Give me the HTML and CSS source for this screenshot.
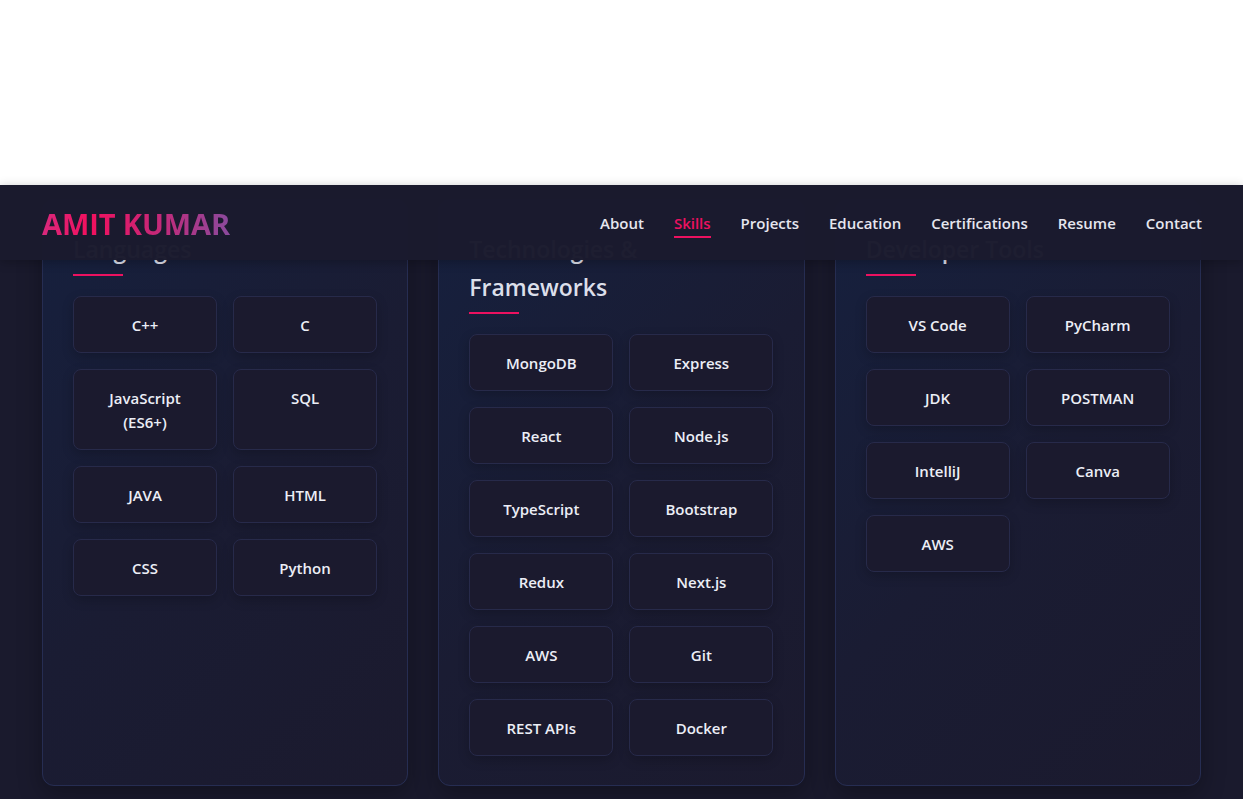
FILE: index.html
```html
<!DOCTYPE html>
<html lang="en">
<head>
<meta charset="utf-8">
<title>Amit Kumar - Skills</title>
<link rel="stylesheet" href="styles.css">
</head>
<body>
<div class="top-space"></div>
<div class="page">
  <nav class="navbar">
    <div class="logo">AMIT KUMAR</div>
    <ul class="nav-links">
      <li><a href="#">About</a></li>
      <li><a href="#" class="active">Skills</a></li>
      <li><a href="#">Projects</a></li>
      <li><a href="#">Education</a></li>
      <li><a href="#">Certifications</a></li>
      <li><a href="#">Resume</a></li>
      <li><a href="#">Contact</a></li>
    </ul>
  </nav>
  <section class="skills">
    <div class="card">
      <h3 class="card-title">Languages</h3>
      <div class="pills">
        <div class="pill">C++</div>
        <div class="pill">C</div>
        <div class="pill">JavaScript (ES6+)</div>
        <div class="pill">SQL</div>
        <div class="pill">JAVA</div>
        <div class="pill">HTML</div>
        <div class="pill">CSS</div>
        <div class="pill">Python</div>
      </div>
    </div>
    <div class="card">
      <h3 class="card-title">Technologies &amp; Frameworks</h3>
      <div class="pills">
        <div class="pill">MongoDB</div>
        <div class="pill">Express</div>
        <div class="pill">React</div>
        <div class="pill">Node.js</div>
        <div class="pill">TypeScript</div>
        <div class="pill">Bootstrap</div>
        <div class="pill">Redux</div>
        <div class="pill">Next.js</div>
        <div class="pill">AWS</div>
        <div class="pill">Git</div>
        <div class="pill">REST APIs</div>
        <div class="pill">Docker</div>
      </div>
    </div>
    <div class="card">
      <h3 class="card-title">Developer Tools</h3>
      <div class="pills">
        <div class="pill">VS Code</div>
        <div class="pill">PyCharm</div>
        <div class="pill">JDK</div>
        <div class="pill">POSTMAN</div>
        <div class="pill">IntelliJ</div>
        <div class="pill">Canva</div>
        <div class="pill">AWS</div>
      </div>
    </div>
  </section>
</div>
</body>
</html>
```

FILE: styles.css
```css
* { box-sizing: border-box; }
html, body { margin: 0; padding: 0; }
body {
  background: #ffffff;
  font-family: "Open Sans", "Noto Sans", sans-serif;
  height: 799px;
  overflow: hidden;
}
.top-space { height: 185px; background: #ffffff; }
.page {
  position: relative;
  background: #1a1a2d;
  height: 614px;
}
.navbar {
  position: absolute;
  top: 0; left: 0; right: 0;
  height: 75px;
  z-index: 10;
  display: flex;
  align-items: center;
  justify-content: space-between;
  padding: 0 41px 0 42px;
  background: rgba(26, 26, 46, 0.985);
  box-shadow: 0 2px 10px rgba(0,0,0,0.25);
}
.logo {
  font-size: 29px;
  font-weight: 700;
  letter-spacing: -0.1px;
  background: linear-gradient(90deg, #d8297d 0%, #f2105e 25%, #c72777 60%, #8a4a9d 100%);
  -webkit-background-clip: text;
  background-clip: text;
  color: transparent;
  margin-top: 2px;
}
.nav-links {
  list-style: none;
  display: flex;
  gap: 30px;
  margin: 0;
  padding: 0;
}
.nav-links a {
  display: block;
  color: #e6e6ee;
  text-decoration: none;
  font-size: 15px;
  font-weight: 600;
  line-height: 22px;
  padding-bottom: 2px;
  border-bottom: 2px solid transparent;
  margin-top: 4px;
}
.nav-links a.active {
  color: #ec1160;
  border-bottom-color: #ec1160;
}
.skills {
  display: grid;
  grid-template-columns: repeat(3, 1fr);
  gap: 30px;
  padding: 14px 42px 0 42px;
}
.card {
  height: 587px;
  padding: 30px 30px 30px 30px;
  border: 1px solid #262d52;
  border-radius: 12px;
  background: linear-gradient(135deg, #16203e 0%, #1a1c33 50%, #1b1a2e 100%);
  box-shadow: 0 8px 24px rgba(0,0,0,0.3);
}
.card-title {
  margin: 0 0 20px 0;
  color: #dcdfea;
  font-size: 23px;
  font-weight: 600;
  line-height: 38px;
  position: relative;
  padding-bottom: 8px;
}
.card-title::after {
  content: "";
  position: absolute;
  left: 0;
  bottom: 0;
  width: 50px;
  height: 2px;
  background: #ec1160;
}
.pills {
  display: grid;
  grid-template-columns: 144px 144px;
  gap: 16px;
}
.pill {
  padding: 16px 12px 15px 12px;
  text-align: center;
  color: #eceef6;
  font-size: 15px;
  font-weight: 600;
  line-height: 24px;
  background: #1b1a2e;
  border: 1px solid #272a4a;
  border-radius: 8px;
  box-shadow: 0 4px 12px rgba(0,0,0,0.2);
}
```
